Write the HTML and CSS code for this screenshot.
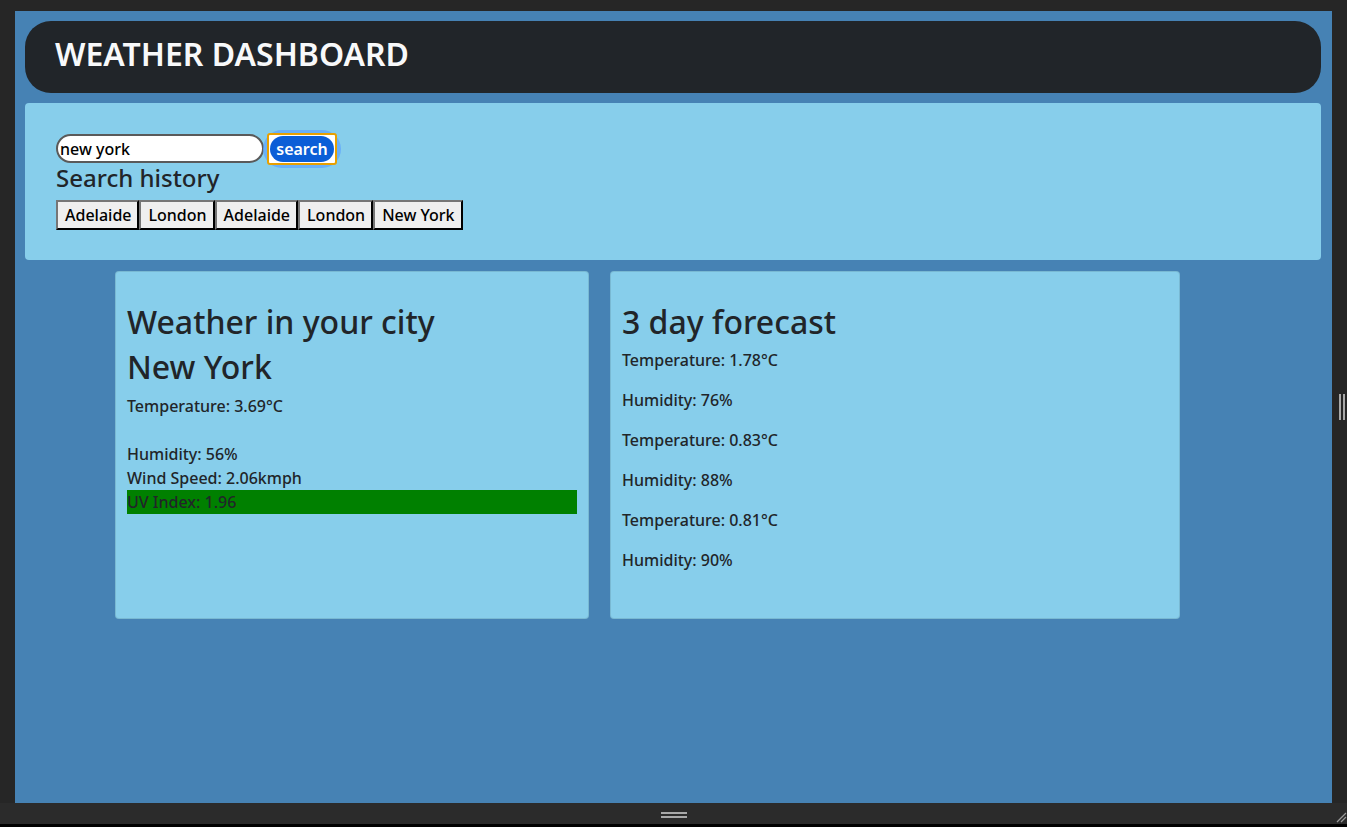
FILE: index.html
```html
<!DOCTYPE html>
<html lang="en">
<head>
<meta charset="utf-8">
<title>Weather Dashboard</title>
<link rel="stylesheet" href="styles.css">
</head>
<body>
<div class="frame">
  <div class="main-row">
    <div class="left-strip"></div>
    <div class="viewport">
      <header class="header">
        <h1 class="title">WEATHER DASHBOARD</h1>
      </header>
      <section class="search-panel">
        <div class="search-row">
          <input class="search-input" type="text" value="new york">
          <span class="btn-halo"><span class="btn-ring"><button class="search-btn">search</button></span></span>
        </div>
        <h4 class="history-title">Search history</h4>
        <div class="history">
          <button class="hist-btn">Adelaide</button><button class="hist-btn">London</button><button class="hist-btn">Adelaide</button><button class="hist-btn">London</button><button class="hist-btn">New York</button>
        </div>
      </section>
      <div class="cards">
        <div class="card card-current">
          <h2 class="card-title">Weather in your city</h2>
          <h2 class="card-title">New York</h2>
          <p class="line line-temp">Temperature: 3.69°C</p>
          <p class="line">Humidity: 56%</p>
          <p class="line">Wind Speed: 2.06kmph</p>
          <p class="line uv">UV Index: 1.96</p>
        </div>
        <div class="card card-forecast">
          <h2 class="card-title">3 day forecast</h2>
          <p class="fline">Temperature: 1.78°C</p>
          <p class="fline">Humidity: 76%</p>
          <p class="fline">Temperature: 0.83°C</p>
          <p class="fline">Humidity: 88%</p>
          <p class="fline">Temperature: 0.81°C</p>
          <p class="fline">Humidity: 90%</p>
        </div>
      </div>
    </div>
    <div class="right-strip"><span class="v-handle"></span></div>
  </div>
  <div class="bottom-bar">
    <span class="h-handle"></span>
    <svg class="grip" width="11" height="11" viewBox="0 0 11 11"><path d="M10 1 L1 10 M10 5 L5 10" stroke="#9a9a9a" stroke-width="1.3" fill="none"/></svg>
  </div>
</div>
</body>
</html>
```
FILE: styles.css
```css
* { box-sizing: border-box; }
html, body { margin: 0; padding: 0; }
body {
  background: #000;
  width: 1347px;
  height: 827px;
  overflow: hidden;
  font-family: "Noto Sans", "Open Sans", sans-serif;
  color: #212529;
}
.frame {
  height: 824px;
  background: #262626;
  padding-top: 11px;
  display: flex;
  flex-direction: column;
}
.main-row {
  display: flex;
  height: 792px;
}
.left-strip { width: 15px; flex: none; }
.right-strip {
  width: 15px;
  flex: none;
  display: flex;
  align-items: center;
  justify-content: flex-end;
  padding-right: 2px;
}
.v-handle {
  width: 6px;
  height: 26px;
  border-left: 2px solid #a8a8a8;
  border-right: 2px solid #a8a8a8;
}
.viewport {
  flex: 1;
  background: #4682b4;
  padding: 10px 11px 0 10px;
  display: flex;
  flex-direction: column;
}
.header {
  height: 72px;
  background: #212529;
  border-radius: 26px;
  display: flex;
  align-items: center;
  padding-left: 30px;
  padding-bottom: 6px;
  flex: none;
}
.title {
  margin: 0;
  color: #f8f9fa;
  font-size: 32px;
  font-weight: 600;
  line-height: 1.2;
  letter-spacing: 0;
}
.search-panel {
  margin-top: 10px;
  height: 157px;
  background: #87ceeb;
  border-radius: 4px;
  padding: 31px 31px 0 31px;
  flex: none;
}
.search-row {
  display: flex;
  align-items: center;
  height: 29px;
}
.search-input {
  width: 208px;
  height: 29px;
  border: 2px solid #5a5a5a;
  border-radius: 15px;
  background: #fff;
  font-family: "Noto Sans", "Open Sans", sans-serif;
  font-size: 16px;
  font-weight: 500;
  color: #000;
  padding: 0 2px;
  outline: none;
}
.btn-halo {
  margin-left: -1px;
  display: inline-flex;
  padding: 3px 4px;
  border-radius: 20px;
  background: rgba(100, 170, 250, 0.85);
}
.btn-ring {
  display: inline-flex;
  border: 2px solid #e8a000;
  border-radius: 3px;
  padding: 1px;
  background: #fff;
}
.search-btn {
  height: 26px;
  width: 64px;
  border: none;
  border-radius: 13px;
  background: #0b5ed7;
  color: #fff;
  font-family: "Noto Sans", "Open Sans", sans-serif;
  font-size: 16px;
  font-weight: 600;
  padding: 0;
  line-height: 26px;
}
.history-title {
  margin: 1px 0 0 0;
  font-size: 24px;
  font-weight: 500;
  line-height: 1.2;
  color: #212529;
}
.history {
  margin-top: 7px;
  display: flex;
}
.hist-btn {
  height: 30px;
  background: #efefef;
  border: 2px outset #4a4a4a;
  border-color: #767676 #2b2b2b #2b2b2b #767676;
  font-family: "Noto Sans", "Open Sans", sans-serif;
  font-size: 16px;
  font-weight: 500;
  color: #000;
  padding: 0 6px 0 7px;
  line-height: 26px;
}
.cards {
  margin-top: 11px;
  margin-left: 90px;
  display: flex;
  gap: 21px;
  align-items: flex-start;
}
.card {
  height: 348px;
  background: #87ceeb;
  border: 1px solid rgba(0, 0, 0, 0.1);
  border-radius: 4px;
  padding: 31px 11px 0 11px;
}
.card-current { width: 474px; }
.card-forecast { width: 570px; }
.card-title {
  margin: 0 0 7px 0;
  font-size: 32px;
  font-weight: 500;
  line-height: 38.4px;
  color: #212529;
}
.line {
  margin: 0;
  font-size: 16px;
  font-weight: 500;
  line-height: 24px;
}
.line-temp { margin-bottom: 24px; }
.uv { background: #008000; }
.fline {
  margin: 0 0 16px 0;
  font-size: 16px;
  font-weight: 500;
  line-height: 24px;
}
.bottom-bar {
  height: 21px;
  background: #2b2b2b;
  display: flex;
  align-items: center;
  justify-content: center;
  position: relative;
}
.h-handle {
  width: 26px;
  height: 6px;
  border-top: 2px solid #a8a8a8;
  border-bottom: 2px solid #a8a8a8;
  margin-top: 2px;
}
.grip {
  position: absolute;
  right: 0;
  bottom: 1px;
}
```
